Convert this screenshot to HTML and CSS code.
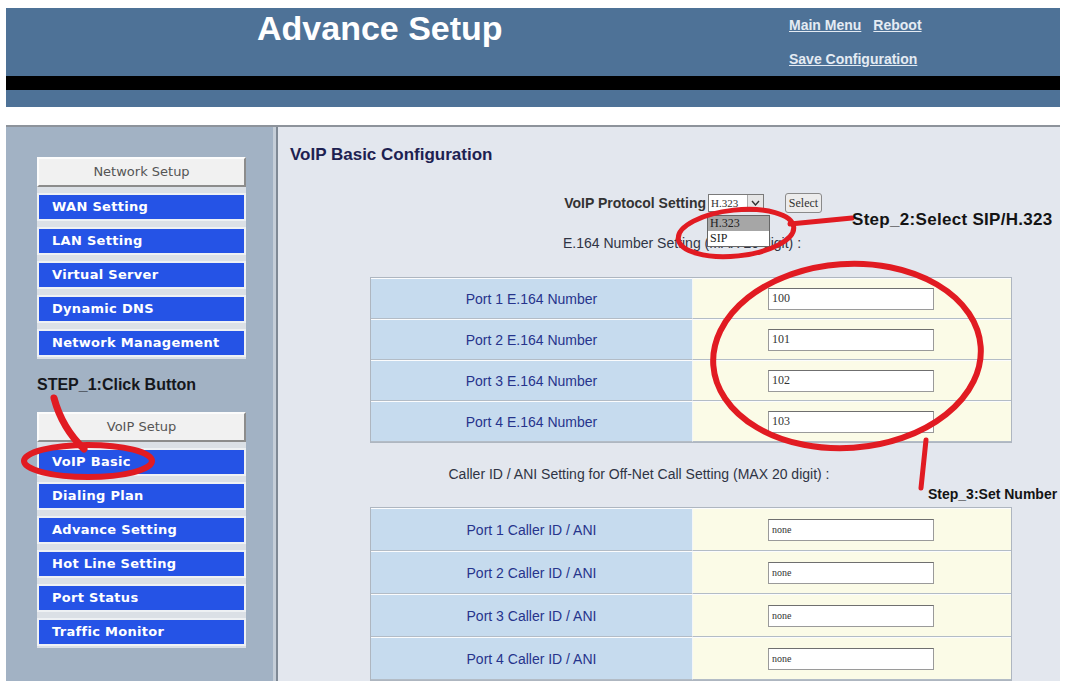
FILE: index.html
```html
<!DOCTYPE html>
<html lang="en">
<head>
    <meta charset="UTF-8">
    <meta name="viewport" content="width=device-width, initial-scale=1.0">
    <title>Advance Setup</title>
    <link rel="stylesheet" href="styles.css">
</head>
<body>
    <div class="page">
        <div class="header">
            <h1 class="title">Advance Setup</h1>
            <div class="top-links">
                <div><a href="#">Main Menu</a><a href="#">Reboot</a></div>
                <div><a href="#">Save Configuration</a></div>
            </div>
        </div>
        <div class="header-bar"></div>
        <div class="header-foot"></div>
        <div class="header-gap"></div>

        <div class="main">
            <div class="sidebar">
                <div class="menu">
                    <div class="menu-head">Network Setup</div>
                    <a class="menu-item" href="#">WAN Setting</a>
                    <a class="menu-item" href="#">LAN Setting</a>
                    <a class="menu-item" href="#">Virtual Server</a>
                    <a class="menu-item" href="#">Dynamic DNS</a>
                    <a class="menu-item" href="#">Network Management</a>
                </div>
                <div class="step-note">STEP_1:Click Button</div>
                <div class="menu">
                    <div class="menu-head">VoIP Setup</div>
                    <a class="menu-item" href="#">VoIP Basic</a>
                    <a class="menu-item" href="#">Dialing Plan</a>
                    <a class="menu-item" href="#">Advance Setting</a>
                    <a class="menu-item" href="#">Hot Line Setting</a>
                    <a class="menu-item" href="#">Port Status</a>
                    <a class="menu-item" href="#">Traffic Monitor</a>
                </div>
            </div>

            <div class="content">
                <h2>VoIP Basic Configuration</h2>

                <div class="proto-row">
                    <label class="proto-label">VoIP Protocol Setting</label>
                    <div class="select-box">
                        <span class="select-value">H.323</span>
                        <span class="select-arrow">
                            <svg width="9" height="6" viewBox="0 0 9 6"><path d="M1 1 L4.5 5 L8 1" fill="none" stroke="#333" stroke-width="1.4"/></svg>
                        </span>
                        <ul class="dropdown">
                            <li class="active">H.323</li>
                            <li>SIP</li>
                        </ul>
                    </div>
                    <button class="select-btn" type="button">Select</button>
                </div>

                <p class="section-note e164">E.164 Number Setting (MAX 20 digit) :</p>
                <table class="cfg">
                    <tr><td class="name">Port 1 E.164 Number</td><td class="value"><input type="text" value="100"></td></tr>
                    <tr><td class="name">Port 2 E.164 Number</td><td class="value"><input type="text" value="101"></td></tr>
                    <tr><td class="name">Port 3 E.164 Number</td><td class="value"><input type="text" value="102"></td></tr>
                    <tr><td class="name">Port 4 E.164 Number</td><td class="value"><input type="text" value="103"></td></tr>
                </table>

                <p class="section-note caller">Caller ID / ANI Setting for Off-Net Call Setting (MAX 20 digit) :</p>
                <table class="cfg tall">
                    <tr><td class="name">Port 1 Caller ID / ANI</td><td class="value"><input class="small" type="text" value="none"></td></tr>
                    <tr><td class="name">Port 2 Caller ID / ANI</td><td class="value"><input class="small" type="text" value="none"></td></tr>
                    <tr><td class="name">Port 3 Caller ID / ANI</td><td class="value"><input class="small" type="text" value="none"></td></tr>
                    <tr><td class="name">Port 4 Caller ID / ANI</td><td class="value"><input class="small" type="text" value="none"></td></tr>
                </table>
            </div>
        </div>
    </div>

    <!-- hand drawn red marks on top of the screenshot -->
    <svg class="marks" width="1065" height="681" viewBox="0 0 1065 681">
        <g fill="none" stroke="#e11b22" stroke-linecap="round">
            <path d="M54 398 Q62 428 84 449" stroke-width="7"/>
            <ellipse cx="88" cy="461" rx="64" ry="16" stroke-width="6"/>
            <ellipse cx="736" cy="233" rx="58" ry="23" stroke-width="5" transform="rotate(-6 736 233)"/>
            <path d="M790 224 L852 218" stroke-width="5"/>
            <ellipse cx="847" cy="356" rx="134" ry="92" stroke-width="6" transform="rotate(-4 847 356)"/>
            <path d="M926 440 L921 488" stroke-width="5"/>
        </g>
    </svg>
    <div class="callout step2">Step_2:Select SIP/H.323</div>
    <div class="callout step3">Step_3:Set Number</div>
</body>
</html>
```

FILE: styles.css
```css
html {
    overflow: hidden;
}
body {
    margin: 0;
    background: #fff;
    font-family: "Liberation Sans", Arial, sans-serif;
}
.page {
    margin: 8px 5px 0 6px;
}

/* header */
.header {
    height: 68px;
    background: #4e7297;
    display: grid;
    grid-template-columns: 783px 1fr;
}
.title {
    margin: 0;
    padding-left: 251px;
    font-size: 34px;
    line-height: 40px;
    font-weight: bold;
    color: #fff;
}
.top-links {
    line-height: 33px;
}
.top-links a {
    color: #e4ebf3;
    font-size: 14px;
    font-weight: bold;
    margin-right: 12px;
}
.header-bar {
    height: 14px;
    background: #000;
}
.header-foot {
    height: 17px;
    background: #4e7297;
}
.header-gap {
    height: 18px;
    background: #fff;
}

/* body area */
.main {
    display: flex;
    border-top: 2px solid #8d939b;
    height: 560px;
}
.sidebar {
    width: 270px;
    box-sizing: border-box;
    background: #a2b2c4;
    border-right: 3px solid #c5ced8;
    padding: 30px 0 0 31px;
}
.menu {
    width: 209px;
    background: #dbe0e6;
    padding-bottom: 2px;
}
.menu-head {
    height: 26px;
    line-height: 26px;
    background: #f1f1f1;
    border: 2px solid;
    border-color: #fcfcfc #8c8c8c #8c8c8c #fcfcfc;
    color: #555;
    text-align: center;
    font-family: "DejaVu Sans", Verdana, sans-serif;
    font-size: 13px;
}
.menu-item {
    display: block;
    margin-top: 6px;
    height: 24px;
    line-height: 24px;
    border: 2px solid #eef1f4;
    background: #2553e6;
    color: #fff;
    font-family: "DejaVu Sans", Verdana, sans-serif;
    font-size: 13px;
    font-weight: bold;
    letter-spacing: 0.3px;
    padding-left: 13px;
    text-decoration: none;
}
.step-note {
    margin: 16px 0 17px;
    font-size: 16px;
    line-height: 20px;
    font-weight: bold;
    color: #15171c;
}

.content {
    flex: 1;
    background: #e3e7ee;
    border-left: 2px solid #7f8995;
    padding: 18px 0 0 12px;
}
.content h2 {
    margin: 0;
    font-size: 17px;
    line-height: 20px;
    color: #1d2151;
}

.proto-row {
    display: flex;
    align-items: center;
    height: 22px;
    margin-top: 27px;
}
.proto-label {
    width: 416px;
    text-align: right;
    font-size: 14px;
    font-weight: bold;
    color: #333;
}
.select-box {
    position: relative;
    display: flex;
    margin-left: 2px;
    width: 56px;
    height: 18px;
    box-sizing: border-box;
    border: 1px solid #7a7a7a;
    background: #fff;
}
.select-value {
    flex: 1;
    font-family: "Liberation Serif", serif;
    font-size: 11px;
    line-height: 16px;
    padding-left: 2px;
    color: #333;
}
.select-arrow {
    width: 15px;
    display: flex;
    align-items: center;
    justify-content: center;
    background: #e6e6e6;
    border-left: 1px solid #aaa;
}
.dropdown {
    position: absolute;
    top: 20px;
    left: -2px;
    width: 61px;
    margin: 0;
    padding: 0;
    list-style: none;
    border: 1px solid #666;
    background: #fff;
    font-family: "Liberation Serif", serif;
    font-size: 12px;
}
.dropdown li {
    height: 15px;
    line-height: 15px;
    padding-left: 2px;
    color: #222;
}
.dropdown li.active {
    background: #a6a6a6;
}
.select-btn {
    margin-left: 21px;
    width: 37px;
    height: 20px;
    padding: 0;
    border: 1px solid #8a8a8a;
    border-radius: 3px;
    background: #ececec;
    font-family: "Liberation Serif", serif;
    font-size: 12px;
    color: #333;
}

.section-note {
    width: 642px;
    margin: 21px 0 0 80px;
    font-size: 14px;
    line-height: 16px;
    text-align: center;
    color: #2f3444;
}
.section-note.e164 {
    padding-right: 18px;
    box-sizing: border-box;
}
.section-note.caller {
    margin-top: 23px;
    padding-right: 104px;
    box-sizing: border-box;
}

.cfg {
    width: 642px;
    margin: 26px 0 0 80px;
    border-collapse: separate;
    border-spacing: 0;
    border: 1px solid #aeb6c0;
}
.cfg.tall {
    margin-top: 25px;
}
.cfg td {
    height: 39px;
    padding: 0;
    border-top: 1px solid #fbfcfd;
    border-bottom: 1px solid #b3bcc6;
}
.cfg.tall td {
    height: 41px;
}
.cfg td.name {
    width: 321px;
    background: #c6dbee;
    border-right: 1px solid #f4f6f8;
    text-align: center;
    font-size: 14px;
    color: #26348c;
}
.cfg td.value {
    background: #fbfbe7;
    padding-left: 75px;
}
.cfg input {
    display: block;
    width: 166px;
    height: 22px;
    box-sizing: border-box;
    border: 1px solid #9a9a9a;
    border-top-color: #6f6f6f;
    padding: 0 3px;
    font-family: "Liberation Serif", serif;
    font-size: 12px;
    color: #333;
    background: #fff;
}
.cfg input.small {
    font-size: 10px;
}

/* annotations */
.marks {
    position: absolute;
    top: 0;
    left: 0;
    pointer-events: none;
}
.callout {
    position: absolute;
    font-size: 17px;
    line-height: 20px;
    font-weight: bold;
    color: #141414;
    white-space: nowrap;
}
.step2 {
    left: 852px;
    top: 210px;
    letter-spacing: 0.3px;
}
.step3 {
    left: 928px;
    top: 484px;
    font-size: 14px;
}
```
